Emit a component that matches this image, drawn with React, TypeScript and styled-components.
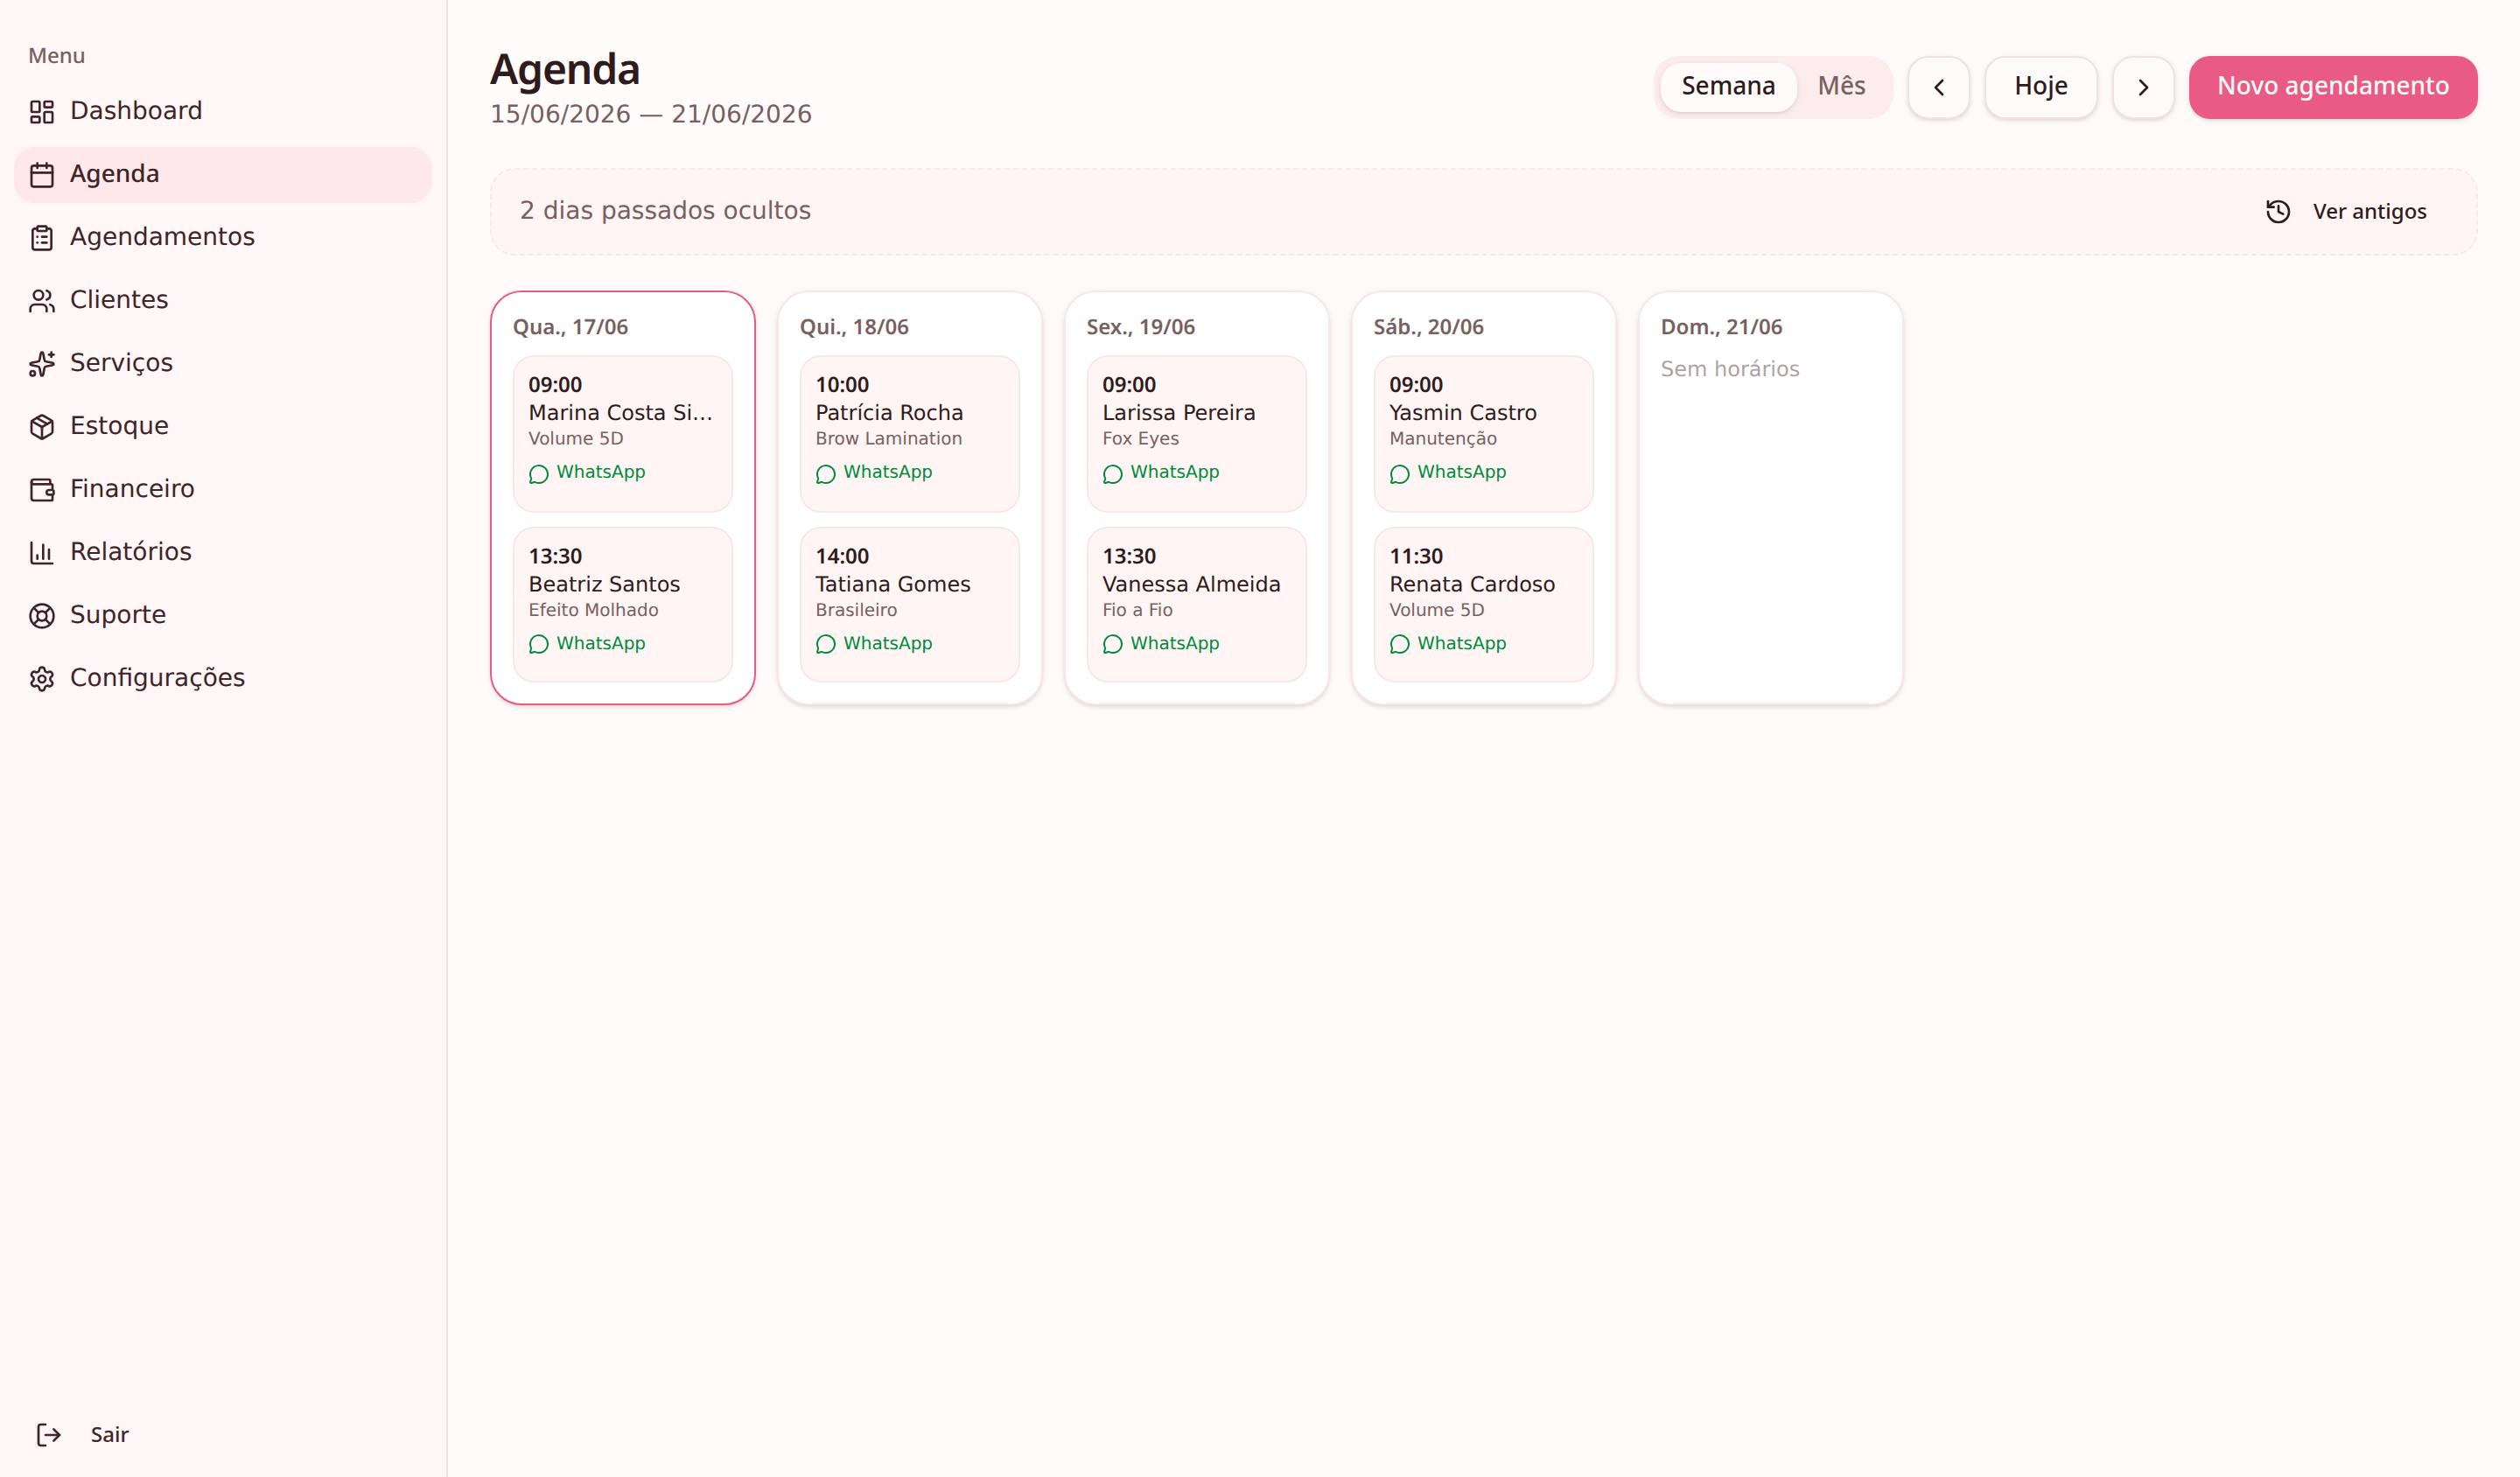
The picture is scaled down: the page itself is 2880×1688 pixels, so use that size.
import React from 'react';
import styled, { createGlobalStyle, css } from 'styled-components';
import {
  Calendar,
  ChartColumn,
  ChevronLeft,
  ChevronRight,
  ClipboardList,
  History,
  LayoutDashboard,
  LifeBuoy,
  LogOut,
  MessageCircle,
  Package,
  Settings,
  Sparkles,
  Users,
  Wallet,
  type LucideIcon,
} from 'lucide-react';

const color = {
  background: '#fffbfa',
  foreground: '#2f1b1c',
  muted: '#786061',
  sidebar: '#fff6f7',
  sidebarText: '#402528',
  sidebarAccent: '#ffe8ea',
  sidebarBorder: '#f0e2e2',
  border: '#f0e2e2',
  softBorder: '#f5e8e8',
  tint: '#fff5f4',
  segment: '#fcedec',
  primary: '#e95a84',
  green: '#008a3e',
};

const body = "'DejaVu Sans', sans-serif";
const strong = "'Noto Sans', sans-serif";
const shadow = '0 2px 6px 0 rgba(0, 0, 0, 0.1), 0 2px 4px -2px rgba(0, 0, 0, 0.1)';

/* Text styles: line-height plus bottom padding adds up to the row height,
   which keeps both font families on one baseline. */
const bodyText = css`
  display: block;
  padding-bottom: 3px;
  font: 400 28px/37px ${body};
`;

const mediumText = css`
  display: block;
  padding-bottom: 4px;
  font: 500 28px/36px ${strong};
`;

const smallStrongText = css`
  display: block;
  padding-bottom: 1px;
  font: 500 24px/31px ${strong};
`;

const GlobalStyle = createGlobalStyle`
  *, *::before, *::after { box-sizing: border-box; }
  body {
    margin: 0;
    background: ${color.background};
    color: ${color.foreground};
    font: 400 28px/40px ${body};
    text-rendering: geometricPrecision;
  }
  h1, h2, p { margin: 0; }
  button { margin: 0; border: 0; background: none; color: inherit; }
`;

const Shell = styled.div`
  display: flex;
  height: 1688px;
`;

const Sidebar = styled.aside`
  display: flex;
  flex-direction: column;
  width: 512px;
  padding: 32px 16px 16px;
  background: ${color.sidebar};
  color: ${color.sidebarText};
  border-right: 2px solid ${color.sidebarBorder};
`;

const BodyLabel = styled.span`
  ${bodyText}
`;

const MediumLabel = styled.span`
  ${mediumText}
`;

const SmallLabel = styled.span`
  ${smallStrongText}
`;

const ButtonLabel = styled.span<{ $small?: boolean }>`
  display: block;
  padding-bottom: ${(p) => (p.$small ? 3 : 6)}px;
  font: 500 ${(p) => (p.$small ? '24px/29px' : '28px/34px')} ${strong};
`;

const MenuLabel = styled.div`
  display: flex;
  align-items: center;
  height: 64px;
  padding: 0 16px;
  color: ${color.muted};
`;

const Nav = styled.nav`
  display: flex;
  flex-direction: column;
  gap: 8px;
  flex: 1;
`;

const NavItem = styled.a<{ $active?: boolean }>`
  display: flex;
  align-items: center;
  gap: 16px;
  height: 64px;
  padding: 0 16px;
  border-radius: 24px;
  background: ${(p) => (p.$active ? color.sidebarAccent : 'transparent')};
`;

const LogoutButton = styled.button`
  display: flex;
  align-items: center;
  gap: 32px;
  height: 64px;
  padding: 0 24px;
`;

const Main = styled.main`
  display: flex;
  flex-direction: column;
  gap: 40px;
  flex: 1;
  padding: 48px;
`;

const Header = styled.header`
  display: flex;
  align-items: center;
  justify-content: space-between;
  height: 104px;
`;

const Title = styled.h1`
  padding-bottom: 3px;
  font: 600 48px/61px ${strong};
  letter-spacing: -1.2px;
`;

const Period = styled.p`
  ${bodyText}
  color: ${color.muted};
`;

const Controls = styled.div`
  display: flex;
  gap: 16px;
`;

const Segmented = styled.div`
  display: grid;
  grid-template-columns: 156px 102px;
  height: 72px;
  padding: 8px;
  border-radius: 28px;
  background: ${color.segment};
`;

const Segment = styled.button<{ $active?: boolean }>`
  display: flex;
  align-items: center;
  justify-content: center;
  padding: 0;
  border-radius: 24px;
  color: ${color.muted};
  ${(p) =>
    p.$active &&
    css`
      background: ${color.background};
      color: ${color.foreground};
      box-shadow: ${shadow};
    `}
`;

const Button = styled.button<{ $width: number; $primary?: boolean }>`
  display: flex;
  align-items: center;
  justify-content: center;
  width: ${(p) => p.$width}px;
  height: 72px;
  padding: 0;
  border: ${(p) => (p.$primary ? '0' : `2px solid ${color.border}`)};
  border-radius: 24px;
  background: ${(p) => (p.$primary ? color.primary : color.background)};
  color: ${(p) => (p.$primary ? '#fffafa' : color.foreground)};
  white-space: nowrap;
  box-shadow: ${shadow};
`;

const Content = styled.div`
  display: flex;
  flex-direction: column;
  gap: 40px;
`;

const HiddenNotice = styled.section`
  display: flex;
  align-items: center;
  justify-content: space-between;
  height: 100px;
  padding: 0 32px;
  border: 2px dashed ${color.softBorder};
  border-radius: 28px;
  background: ${color.tint};
  color: ${color.muted};
`;

const GhostButton = styled.button`
  display: flex;
  align-items: center;
  gap: 24px;
  height: 64px;
  padding: 0 24px;
  color: ${color.foreground};
`;

const Week = styled.div`
  display: grid;
  grid-template-columns: repeat(7, 304px);
  gap: 24px;
`;

const Day = styled.section<{ $today?: boolean }>`
  height: 474px;
  padding: 24px;
  border: 2px solid ${(p) => (p.$today ? color.primary : color.softBorder)};
  border-radius: 36px;
  background: #fff;
  box-shadow: ${shadow};
`;

const DayTitle = styled.h2`
  ${smallStrongText}
  margin-bottom: 16px;
  font-weight: 600;
  color: ${color.muted};
`;

const Empty = styled.p`
  font-size: 24px;
  line-height: 32px;
  color: #b0a2a2;
`;

const Slots = styled.div`
  display: grid;
  grid-template-rows: 180px 178px;
  gap: 16px;
`;

const Slot = styled.article`
  padding: 16px;
  border: 2px solid ${color.softBorder};
  border-radius: 24px;
  background: ${color.tint};
  min-width: 0;
`;

const Time = styled.p`
  ${smallStrongText}
  font-weight: 600;
`;

const Client = styled.p`
  overflow: hidden;
  font-size: 24px;
  line-height: 32px;
  white-space: nowrap;
  text-overflow: ellipsis;
`;

const Service = styled.p`
  font-size: 20px;
  line-height: 26px;
  color: ${color.muted};
`;

const Contact = styled.a<{ $lowered?: boolean }>`
  display: flex;
  align-items: flex-start;
  gap: 8px;
  margin-top: 12px;
  font-size: 20px;
  line-height: 26px;
  color: ${color.green};
  svg { margin-top: ${(p) => (p.$lowered ? 4 : 2)}px; }
`;

const menu: [string, LucideIcon][] = [
  ['Dashboard', LayoutDashboard],
  ['Agenda', Calendar],
  ['Agendamentos', ClipboardList],
  ['Clientes', Users],
  ['Serviços', Sparkles],
  ['Estoque', Package],
  ['Financeiro', Wallet],
  ['Relatórios', ChartColumn],
  ['Suporte', LifeBuoy],
  ['Configurações', Settings],
];

type Appointment = { time: string; client: string; service: string };

const days: { label: string; today?: boolean; items: Appointment[] }[] = [
  {
    label: 'Qua., 17/06',
    today: true,
    items: [
      { time: '09:00', client: 'Marina Costa Silva', service: 'Volume 5D' },
      { time: '13:30', client: 'Beatriz Santos', service: 'Efeito Molhado' },
    ],
  },
  {
    label: 'Qui., 18/06',
    items: [
      { time: '10:00', client: 'Patrícia Rocha', service: 'Brow Lamination' },
      { time: '14:00', client: 'Tatiana Gomes', service: 'Brasileiro' },
    ],
  },
  {
    label: 'Sex., 19/06',
    items: [
      { time: '09:00', client: 'Larissa Pereira', service: 'Fox Eyes' },
      { time: '13:30', client: 'Vanessa Almeida', service: 'Fio a Fio' },
    ],
  },
  {
    label: 'Sáb., 20/06',
    items: [
      { time: '09:00', client: 'Yasmin Castro', service: 'Manutenção' },
      { time: '11:30', client: 'Renata Cardoso', service: 'Volume 5D' },
    ],
  },
  { label: 'Dom., 21/06', items: [] },
];

export default function App() {
  return (
    <>
      <GlobalStyle />
      <Shell>
        <Sidebar>
          <MenuLabel>
            <SmallLabel>Menu</SmallLabel>
          </MenuLabel>
          <Nav>
            {menu.map(([label, Icon]) => {
              const active = label === 'Agenda';
              const Label = active ? MediumLabel : BodyLabel;
              return (
                <NavItem key={label} $active={active}>
                  <Icon size={32} />
                  <Label>{label}</Label>
                </NavItem>
              );
            })}
          </Nav>
          <LogoutButton>
            <LogOut size={32} />
            <ButtonLabel $small>Sair</ButtonLabel>
          </LogoutButton>
        </Sidebar>
        <Main>
          <Header>
            <div>
              <Title>Agenda</Title>
              <Period>15/06/2026 — 21/06/2026</Period>
            </div>
            <Controls>
              <Segmented>
                <Segment $active>
                  <ButtonLabel>Semana</ButtonLabel>
                </Segment>
                <Segment>
                  <ButtonLabel>Mês</ButtonLabel>
                </Segment>
              </Segmented>
              <Button $width={72}>
                <ChevronLeft size={32} />
              </Button>
              <Button $width={130}>
                <ButtonLabel>Hoje</ButtonLabel>
              </Button>
              <Button $width={72}>
                <ChevronRight size={32} />
              </Button>
              <Button $width={330} $primary>
                <ButtonLabel>Novo agendamento</ButtonLabel>
              </Button>
            </Controls>
          </Header>
          <Content>
            <HiddenNotice>
              <BodyLabel>2 dias passados ocultos</BodyLabel>
              <GhostButton>
                <History size={32} />
                <ButtonLabel $small>Ver antigos</ButtonLabel>
              </GhostButton>
            </HiddenNotice>
            <Week>
              {days.map((day) => (
                <Day key={day.label} $today={day.today}>
                  <DayTitle>{day.label}</DayTitle>
                  {day.items.length === 0 ? (
                    <Empty>Sem horários</Empty>
                  ) : (
                    <Slots>
                      {day.items.map((item, i) => (
                        <Slot key={item.time}>
                          <Time>{item.time}</Time>
                          <Client>{item.client}</Client>
                          <Service>{item.service}</Service>
                          <Contact $lowered={i === 0}>
                            <MessageCircle size={24} />
                            WhatsApp
                          </Contact>
                        </Slot>
                      ))}
                    </Slots>
                  )}
                </Day>
              ))}
            </Week>
          </Content>
        </Main>
      </Shell>
    </>
  );
}
